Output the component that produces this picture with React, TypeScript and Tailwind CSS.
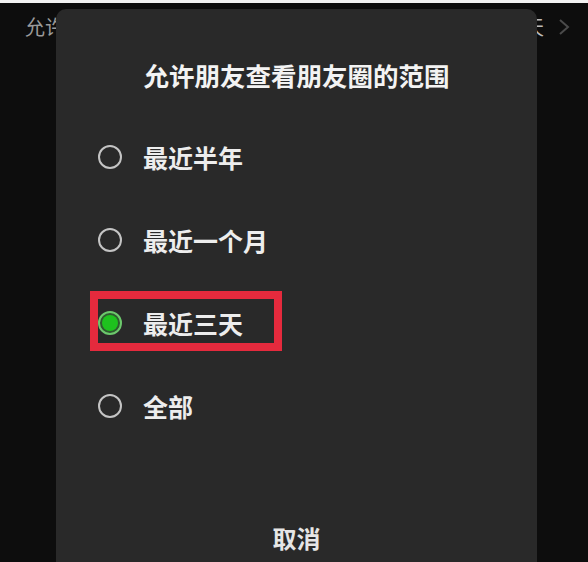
import React from "react";

const options = [
  { label: "最近半年", selected: false },
  { label: "最近一个月", selected: false },
  { label: "最近三天", selected: true },
  { label: "全部", selected: false },
];

export default function App() {
  return (
    <div
      className="relative w-[588px] h-[562px] overflow-hidden bg-[#0d0d0d]"
      style={{ fontFamily: '"Noto Sans CJK SC", "Noto Sans", sans-serif' }}
    >
      <div className="h-[3px] bg-[#f2f2f2]" />
      <div className="flex items-center h-[48px] pl-[25px] pr-[18px] text-[20px] text-[#9a9a9a]">
        <span className="flex-1">允许朋友查看朋友圈的范围</span>
        <span className="text-[#bbbbbb] mr-[14px]">最近三天</span>
        <svg width="12" height="18" viewBox="0 0 12 18" fill="none">
          <path d="M2 2l8 7-8 7" stroke="#4a4a4a" strokeWidth="2" />
        </svg>
      </div>

      <div className="absolute left-[56px] top-[9px] w-[481px] h-[600px] rounded-[10px] bg-[#292929] flex flex-col">
        <div className="pt-[48px] h-[106px] text-center text-[25.5px] leading-[36px] font-bold text-[#f3f3f3]">
          允许朋友查看朋友圈的范围
        </div>
        <div className="flex flex-col">
          {options.map((o) => (
            <div key={o.label} className="relative h-[83px] flex items-center pl-[42px]">
              {o.selected ? (
                <div className="w-[24px] h-[24px] rounded-full border-[2px] border-[#6cc86c] flex items-center justify-center bg-[#2f5a2f]">
                  <div className="w-[16px] h-[16px] rounded-full bg-[#1ec21e]" />
                </div>
              ) : (
                <div className="w-[24px] h-[24px] rounded-full border-[2.5px] border-[#c4c4c4]" />
              )}
              <span className="ml-[21px] text-[25px] leading-[34px] font-bold text-[#ededed]">
                {o.label}
              </span>
              {o.selected && (
                <div className="absolute left-[34px] top-[10px] w-[192px] h-[60px] border-[8px] border-[#e52a3d]" />
              )}
            </div>
          ))}
        </div>
        <div className="mt-[74px] text-center text-[24px] leading-[34px] font-bold text-[#e6e6e6]">
          取消
        </div>
      </div>
    </div>
  );
}
